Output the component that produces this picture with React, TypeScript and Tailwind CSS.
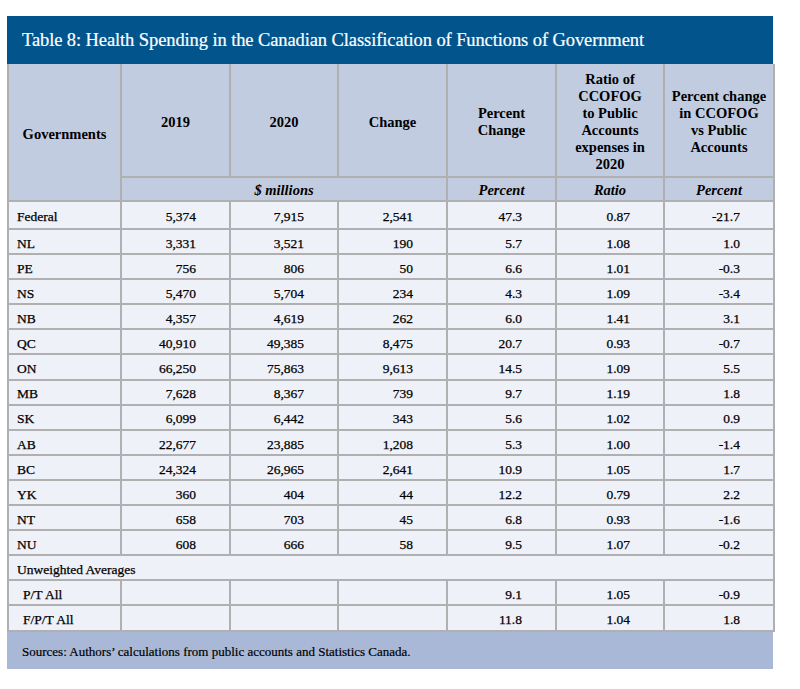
import React from "react";

const rows: [string, string, string, string, string, string, string][] = [
  ["Federal", "5,374", "7,915", "2,541", "47.3", "0.87", "-21.7"],
  ["NL", "3,331", "3,521", "190", "5.7", "1.08", "1.0"],
  ["PE", "756", "806", "50", "6.6", "1.01", "-0.3"],
  ["NS", "5,470", "5,704", "234", "4.3", "1.09", "-3.4"],
  ["NB", "4,357", "4,619", "262", "6.0", "1.41", "3.1"],
  ["QC", "40,910", "49,385", "8,475", "20.7", "0.93", "-0.7"],
  ["ON", "66,250", "75,863", "9,613", "14.5", "1.09", "5.5"],
  ["MB", "7,628", "8,367", "739", "9.7", "1.19", "1.8"],
  ["SK", "6,099", "6,442", "343", "5.6", "1.02", "0.9"],
  ["AB", "22,677", "23,885", "1,208", "5.3", "1.00", "-1.4"],
  ["BC", "24,324", "26,965", "2,641", "10.9", "1.05", "1.7"],
  ["YK", "360", "404", "44", "12.2", "0.79", "2.2"],
  ["NT", "658", "703", "45", "6.8", "0.93", "-1.6"],
  ["NU", "608", "666", "58", "9.5", "1.07", "-0.2"],
];

const avg: [string, string, string, string][] = [
  ["P/T All", "9.1", "1.05", "-0.9"],
  ["F/P/T All", "11.8", "1.04", "1.8"],
];

const base = "border-2 border-[#b0b0b0] p-0 pt-[4px] align-middle";
const cell = base + " h-[25.1px]";
const first = base + " h-[28px]";
const numCls = (c: string) => c + " text-right pr-[33px]";

export default function App() {
  return (
    <div className="bg-white w-[800px] h-[689px] pt-[16px] pl-[7px] font-['Liberation_Serif','Times_New_Roman',serif]">
      <div className="w-[766px]">
        <div className="bg-[#02548c] h-[48px] flex items-center pl-[15px] pt-[2px] text-white text-[18.5px] tracking-[-0.1px] [-webkit-text-stroke:0.2px_white]">
          Table 8: Health Spending in the Canadian Classification of Functions of Government
        </div>
        <table className="table-fixed border-collapse w-[766px] text-[13.5px] text-black leading-none [-webkit-text-stroke:0.25px_black]">
          <colgroup>
            <col className="w-[113px]" />
            <col className="w-[109px]" />
            <col className="w-[108px]" />
            <col className="w-[109px]" />
            <col className="w-[109px]" />
            <col className="w-[108px]" />
            <col className="w-[110px]" />
          </colgroup>
          <thead className="bg-[#c2cce0] font-bold text-[14.5px] leading-[17px] [-webkit-text-stroke:0px]">
            <tr>
              <th rowSpan={2} className="border-2 border-t-0 border-[#b0b0b0] font-bold text-center pt-[4px]">
                Governments
              </th>
              <th className="border-2 border-t-0 border-[#b0b0b0] h-[113px] font-bold pt-[4px]">2019</th>
              <th className="border-2 border-t-0 border-[#b0b0b0] font-bold pt-[4px]">2020</th>
              <th className="border-2 border-t-0 border-[#b0b0b0] font-bold pt-[4px]">Change</th>
              <th className="border-2 border-t-0 border-[#b0b0b0] font-bold pt-[4px]">
                Percent
                <br />
                Change
              </th>
              <th className="border-2 border-t-0 border-[#b0b0b0] font-bold px-1 pt-[4px]">
                Ratio of
                <br />
                CCOFOG
                <br />
                to Public
                <br />
                Accounts
                <br />
                expenses in
                <br />
                2020
              </th>
              <th className="border-2 border-t-0 border-[#b0b0b0] font-bold px-1 pt-[4px]">
                Percent change
                <br />
                in CCOFOG
                <br />
                vs Public
                <br />
                Accounts
              </th>
            </tr>
            <tr>
              <th colSpan={3} className="border-2 border-[#b0b0b0] h-[24px] italic font-bold pt-[3px]">
                $ millions
              </th>
              <th className="border-2 border-[#b0b0b0] italic font-bold pt-[3px]">Percent</th>
              <th className="border-2 border-[#b0b0b0] italic font-bold pt-[3px]">Ratio</th>
              <th className="border-2 border-[#b0b0b0] italic font-bold pt-[3px]">Percent</th>
            </tr>
          </thead>
          <tbody className="bg-[#eef1f8]">
            {rows.map((r, idx) => {
              const c = idx === 0 ? first : cell;
              return (
                <tr key={r[0]}>
                  <td className={c + " pl-[8px]"}>{r[0]}</td>
                  {r.slice(1).map((v, i) => (
                    <td key={i} className={numCls(c)}>
                      {v}
                    </td>
                  ))}
                </tr>
              );
            })}
            <tr>
              <td colSpan={7} className={cell + " pl-[8px]"}>
                Unweighted Averages
              </td>
            </tr>
            {avg.map((r) => (
              <tr key={r[0]}>
                <td className={cell + " pl-[14px]"}>{r[0]}</td>
                <td className={cell}></td>
                <td className={cell}></td>
                <td className={cell}></td>
                <td className={numCls(cell)}>{r[1]}</td>
                <td className={numCls(cell)}>{r[2]}</td>
                <td className={numCls(cell)}>{r[3]}</td>
              </tr>
            ))}
          </tbody>
        </table>
        <div className="bg-[#a9b8d6] h-[37px] flex items-center pl-[15px] pt-[3px] text-[13px] text-black [-webkit-text-stroke:0.2px_black]">
          Sources: Authors’ calculations from public accounts and Statistics Canada.
        </div>
      </div>
    </div>
  );
}
